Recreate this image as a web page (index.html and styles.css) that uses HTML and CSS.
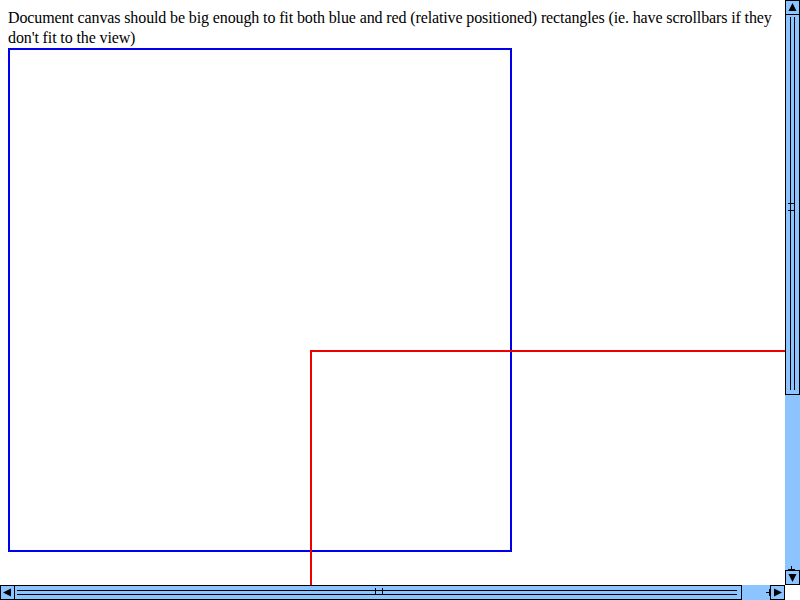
FILE: index.html
```html
<!DOCTYPE html>
<html>
<head>
<meta charset="utf-8">
<link rel="stylesheet" href="styles.css">
</head>
<body>
<div class="note">Document canvas should be big enough to fit both blue and red (relative positioned) rectangles (ie. have scrollbars if they don't fit to the view)</div>
<div class="blue"></div>
<div class="red"></div>

<div class="vbar">
  <div class="vbtn up"><svg width="13" height="13" viewBox="0 0 13 13"><polygon points="6.5,2 10.5,10 2.5,10" fill="#000"/></svg></div>
  <div class="vthumb"><div class="vgroove"><span class="tick t1"></span><span class="tick t2"></span></div></div>
  <div class="vtrack"><span class="stem-v"></span></div>
  <div class="vbtn down"><svg width="13" height="13" viewBox="0 0 13 13"><polygon points="2.5,3 10.5,3 6.5,11" fill="#000"/></svg></div>
</div>
<div class="hbar">
  <div class="hbtn left"><svg width="13" height="13" viewBox="0 0 13 13"><polygon points="2,6.5 10,2.5 10,10.5" fill="#000"/></svg></div>
  <div class="hthumb"><div class="hgroove"><span class="htick h1"></span><span class="htick h2"></span></div></div>
  <div class="htrack"><span class="stem-h"></span></div>
  <div class="hbtn right"><svg width="13" height="13" viewBox="0 0 13 13"><polygon points="3,2.5 11,6.5 3,10.5" fill="#000"/></svg></div>
</div>
<div class="corner"></div>
</body>
</html>
```
FILE: styles.css
```css
html { overflow: hidden; background: #fff; }
body {
  margin: 8px;
  font-family: "Liberation Serif", "Times New Roman", serif;
  font-size: 16px;
  color: #000;
}
.note {
  width: 769px;
  line-height: 20px;
  letter-spacing: -0.12px;
}
.blue {
  width: 500px;
  height: 500px;
  border: 2px solid #0000ee;
}
.red {
  position: relative;
  left: 302px;
  top: -202px;
  width: 500px;
  height: 500px;
  border: 2px solid #ee0000;
}
.vbar {
  position: fixed;
  top: 0;
  right: 0;
  width: 15px;
  height: 585px;
  background: #8cc4ff;
  display: flex;
  flex-direction: column;
}
.vbtn, .hbtn {
  box-sizing: border-box;
  width: 15px;
  height: 15px;
  border: 1px solid #000;
  background: #8cc4ff;
  display: flex;
  flex: none;
}
.vbtn svg, .hbtn svg { display: block; }
.vthumb {
  box-sizing: border-box;
  height: 380px;
  flex: none;
  border: 1px solid #000;
  border-top: 0;
  display: flex;
  justify-content: center;
  padding: 2px 0 4px;
}
.vgroove {
  position: relative;
  width: 3px;
  border-left: 1px solid #000;
  border-right: 1px solid #000;
}
.tick {
  position: absolute;
  left: -3px;
  width: 7px;
  height: 1px;
  background: #000;
}
.t1 { top: 186px; }
.t2 { top: 193px; }
.vtrack { flex: 1; position: relative; }
.stem-v {
  position: absolute;
  bottom: 0;
  left: 3px;
  width: 7px;
  height: 1px;
  background: #000;
}
.stem-v::after {
  content: "";
  position: absolute;
  left: 3px;
  bottom: 0;
  width: 1px;
  height: 4px;
  background: #000;
}
.hbar {
  position: fixed;
  left: 0;
  bottom: 0;
  width: 785px;
  height: 15px;
  background: #8cc4ff;
  display: flex;
}
.hthumb {
  box-sizing: border-box;
  width: 727px;
  flex: none;
  border: 1px solid #000;
  border-left: 0;
  display: flex;
  flex-direction: column;
  justify-content: center;
  padding: 0 4px 0 2px;
}
.hgroove {
  position: relative;
  height: 3px;
  border-top: 1px solid #000;
  border-bottom: 1px solid #000;
}
.htick {
  position: absolute;
  top: -3px;
  width: 1px;
  height: 7px;
  background: #000;
}
.h1 { left: 358px; }
.h2 { left: 365px; }
.htrack { flex: 1; position: relative; }
.stem-h {
  position: absolute;
  right: 0;
  top: 4px;
  width: 1px;
  height: 7px;
  background: #000;
}
.stem-h::after {
  content: "";
  position: absolute;
  right: 0;
  top: 3px;
  width: 4px;
  height: 1px;
  background: #000;
}
.corner {
  position: fixed;
  right: 0;
  bottom: 0;
  width: 15px;
  height: 15px;
  background: #fff;
}
```
